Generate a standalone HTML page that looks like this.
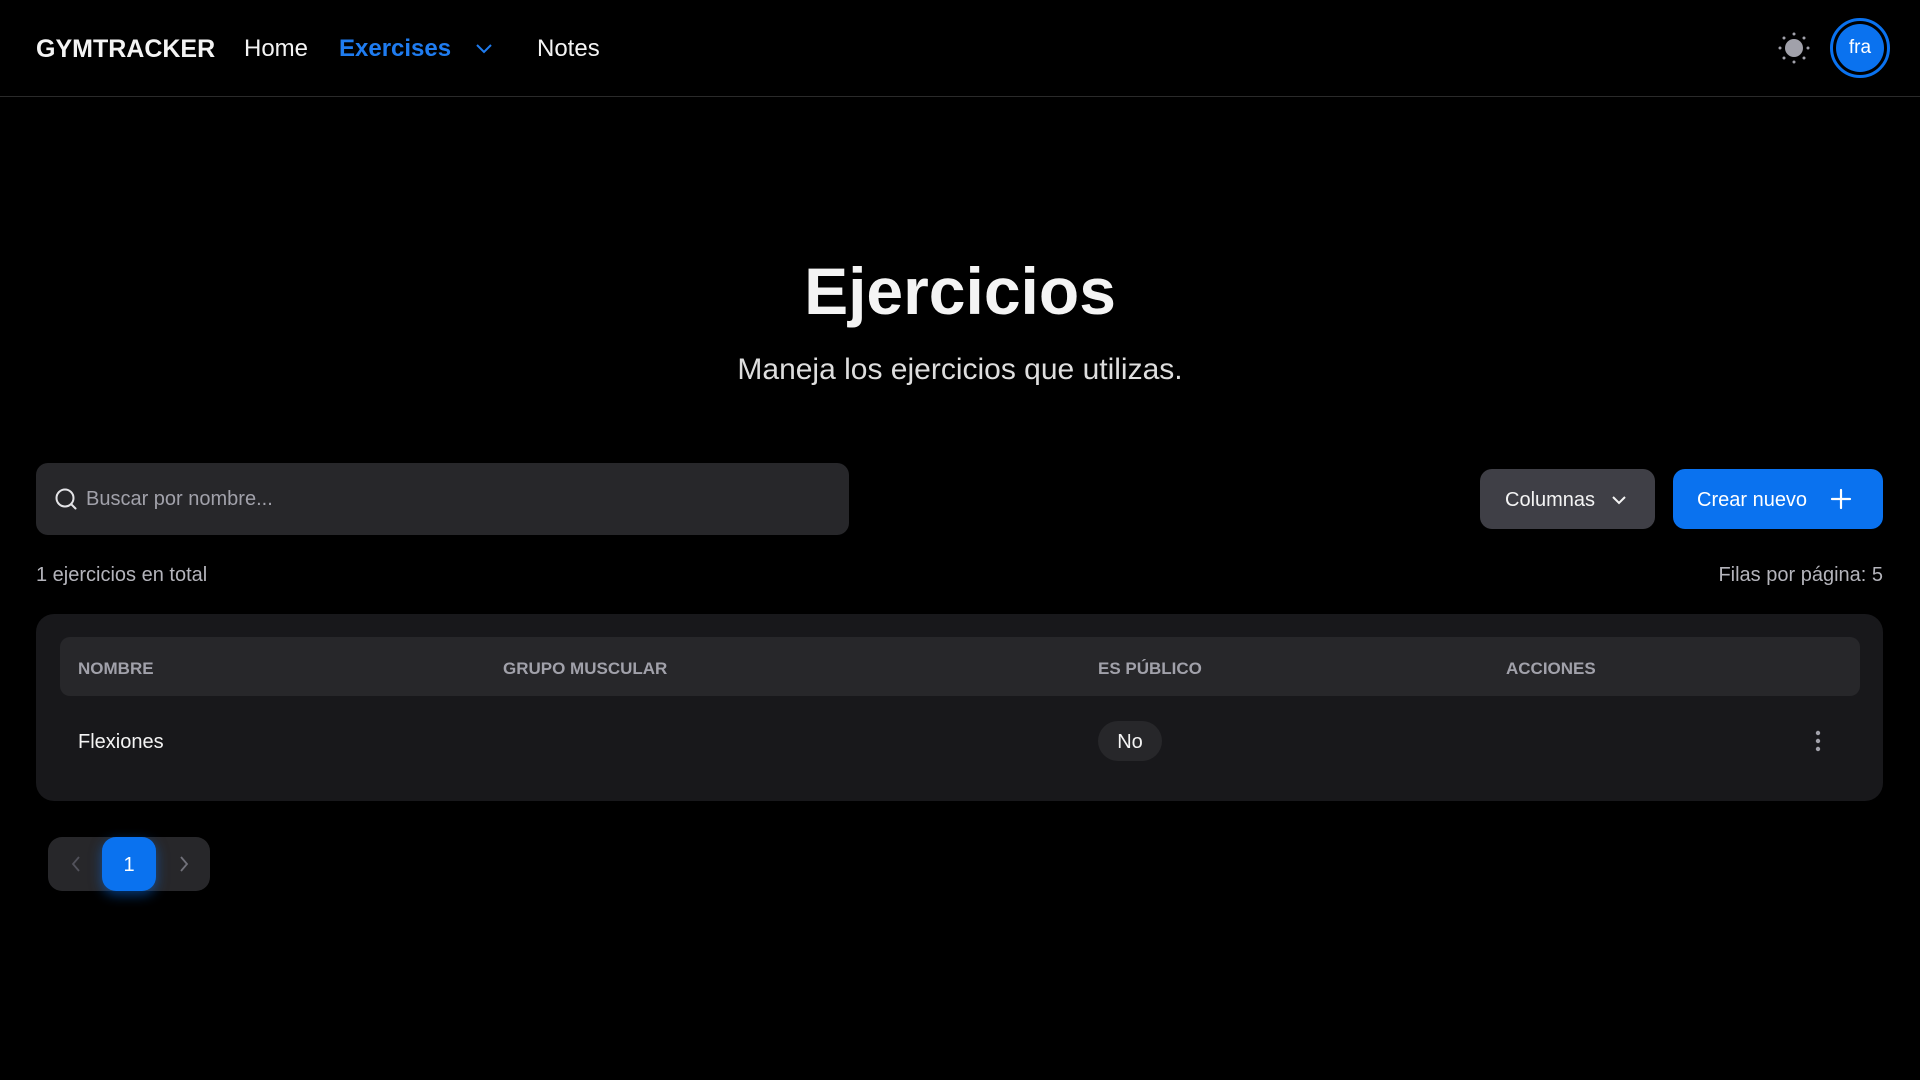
<!DOCTYPE html>
<html><head><meta charset="utf-8"><style>
*{box-sizing:border-box;margin:0;padding:0}
body{width:1920px;height:1080px;background:#000;color:#ececec;font-family:"Liberation Sans",sans-serif;position:relative;overflow:hidden}
.a{position:absolute}
nav{position:absolute;left:0;top:0;width:1920px;height:97px;border-bottom:1px solid #2a2a2a}
</style></head><body>
<nav>
<div class="a" style="left:36px;top:35px;font-size:25px;font-weight:bold;color:#f4f4f4">GYMTRACKER</div>
<div class="a" style="left:244px;top:35px;font-size:24px;color:#f4f4f4">Home</div>
<div class="a" style="left:339px;top:35px;font-size:24px;font-weight:bold;color:#1f7cf0">Exercises</div>
<svg class="a" style="left:474px;top:41px" width="20" height="14" viewBox="0 0 20 14"><path d="M3 4l7 7 7-7" fill="none" stroke="#1f7cf0" stroke-width="2"/></svg>
<div class="a" style="left:537px;top:35px;font-size:24px;color:#f4f4f4">Notes</div>
<svg class="a" style="left:1776px;top:30px" width="36" height="36" viewBox="0 0 36 36"><circle cx="18" cy="18" r="9" fill="#a1a1aa"/><g fill="#a1a1aa"><circle cx="18" cy="4" r="1.5"/><circle cx="18" cy="32" r="1.5"/><circle cx="4" cy="18" r="1.5"/><circle cx="32" cy="18" r="1.5"/><circle cx="8" cy="8" r="1.5"/><circle cx="28" cy="8" r="1.5"/><circle cx="8" cy="28" r="1.5"/><circle cx="28" cy="28" r="1.5"/></g></svg>
<div class="a" style="left:1830px;top:18px;width:60px;height:60px;border-radius:50%;border:3px solid #0a72ef;padding:3px"><div style="width:100%;height:100%;border-radius:50%;background:#0a72ef;color:#fff;font-size:19px;display:flex;align-items:center;justify-content:center">fra</div></div>
</nav>
<div class="a" style="left:0;width:1920px;top:253px;text-align:center;font-size:66px;font-weight:bold;color:#f4f4f4">Ejercicios</div>
<div class="a" style="left:0;width:1920px;top:353px;text-align:center;font-size:30px;color:#dedede">Maneja los ejercicios que utilizas.</div>
<div class="a" style="left:36px;top:463px;width:813px;height:72px;background:#27272a;border-radius:12px"></div>
<svg class="a" style="left:53px;top:486px" width="26" height="26" viewBox="0 0 26 26"><circle cx="12" cy="12" r="8.5" fill="none" stroke="#e4e4e7" stroke-width="2"/><path d="M18.5 18.5l4 4" stroke="#e4e4e7" stroke-width="2" stroke-linecap="round"/></svg>
<div class="a" style="left:86px;top:488px;font-size:20px;color:#a1a1aa">Buscar por nombre...</div>
<div class="a" style="left:1480px;top:469px;width:175px;height:60px;background:#3f3f46;border-radius:12px;font-size:20px;color:#f4f4f4;padding:20px 0 0 25px">Columnas</div>
<svg class="a" style="left:1610px;top:494px" width="18" height="12" viewBox="0 0 18 12"><path d="M3 3l6 6 6-6" fill="none" stroke="#f4f4f4" stroke-width="2"/></svg>
<div class="a" style="left:1673px;top:469px;width:210px;height:60px;background:#0a72ef;border-radius:12px;font-size:20px;color:#fff;padding:20px 0 0 24px">Crear nuevo</div>
<svg class="a" style="left:1830px;top:488px" width="22" height="22" viewBox="0 0 22 22"><path d="M11 2v18M2 11h18" stroke="#fff" stroke-width="2.2" stroke-linecap="round"/></svg>
<div class="a" style="left:36px;top:564px;font-size:20px;color:#b4b4bb">1 ejercicios en total</div>
<div class="a" style="right:37px;top:564px;font-size:20px;color:#b4b4bb">Filas por página: 5</div>
<div class="a" style="left:36px;top:614px;width:1847px;height:187px;background:#18181b;border-radius:18px"></div>
<div class="a" style="left:60px;top:637px;width:1800px;height:59px;background:#27272a;border-radius:10px"></div>
<div class="a" style="top:659px;left:78px;font-size:17px;font-weight:bold;color:#a1a1aa">NOMBRE</div>
<div class="a" style="top:659px;left:503px;font-size:17px;font-weight:bold;color:#a1a1aa">GRUPO MUSCULAR</div>
<div class="a" style="top:659px;left:1098px;font-size:17px;font-weight:bold;color:#a1a1aa">ES PÚBLICO</div>
<div class="a" style="top:659px;left:1506px;font-size:17px;font-weight:bold;color:#a1a1aa">ACCIONES</div>
<div class="a" style="top:731px;left:78px;font-size:20px;color:#f4f4f4">Flexiones</div>
<div class="a" style="top:721px;left:1098px;width:64px;height:40px;border-radius:20px;background:#27272a;font-size:20px;color:#f4f4f4;text-align:center;line-height:42px">No</div>
<svg class="a" style="left:1811px;top:728px" width="14" height="26" viewBox="0 0 14 26"><g fill="#a1a1aa"><circle cx="7" cy="5" r="2.2"/><circle cx="7" cy="13" r="2.2"/><circle cx="7" cy="21" r="2.2"/></g></svg>
<div class="a" style="left:48px;top:837px;width:162px;height:54px;background:#27272a;border-radius:14px"></div>
<svg class="a" style="left:68px;top:853px" width="16" height="22" viewBox="0 0 16 22"><path d="M11 4l-6 7 6 7" fill="none" stroke="#52525b" stroke-width="1.8"/></svg>
<svg class="a" style="left:176px;top:853px" width="16" height="22" viewBox="0 0 16 22"><path d="M5 4l6 7-6 7" fill="none" stroke="#71717a" stroke-width="1.8"/></svg>
<div class="a" style="left:102px;top:837px;width:54px;height:54px;background:#0a72ef;border-radius:14px;color:#fff;font-size:20px;text-align:center;line-height:56px;box-shadow:0 4px 12px rgba(10,114,239,.5)">1</div>
</body></html>
